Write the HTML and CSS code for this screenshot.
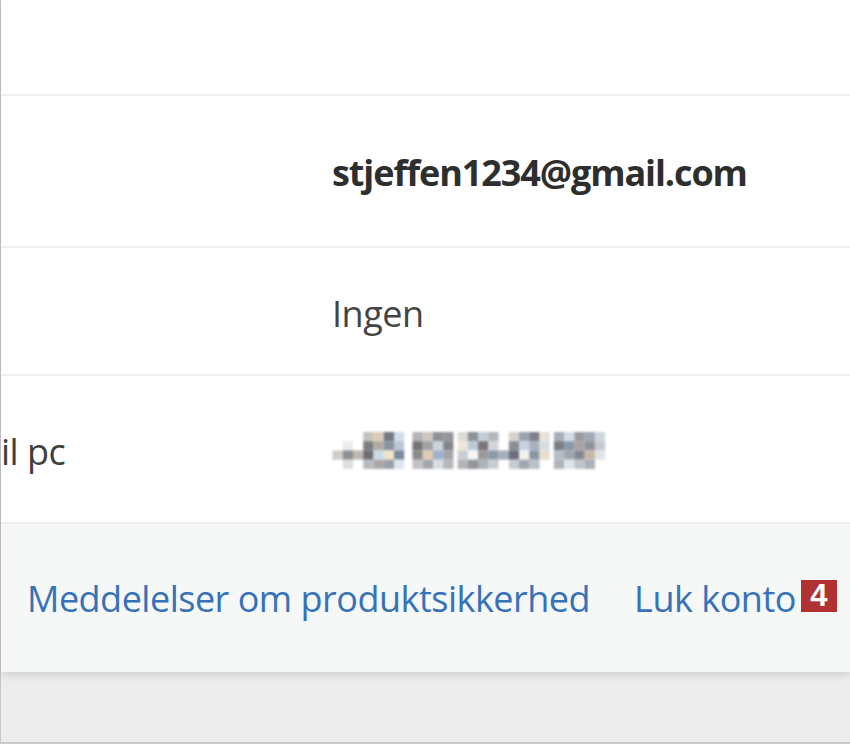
FILE: index.html
```html
<!DOCTYPE html>
<html>
<head>
	<meta charset="utf-8">
	<title>Konto</title>
	<link rel="stylesheet" href="styles.css">
</head>
<body>
	<div class="page">
		<div class="panel">
			<div class="row row-top"></div>
			<div class="row row-mail">
				<div class="label"></div>
				<div class="value strong">stjeffen1234@gmail.com</div>
			</div>
			<div class="row row-none">
				<div class="label"></div>
				<div class="value">Ingen</div>
			</div>
			<div class="row row-phone">
				<div class="label">il pc</div>
				<div class="value">
					<svg class="blur" width="288" height="41" viewBox="0 0 280 40">
						<!-- +45 -->
						<rect x="0" y="18" width="10" height="9" fill="#cfcac6"/>
						<rect x="10" y="9" width="10" height="9" fill="#ececec"/>
						<rect x="10" y="18" width="10" height="9" fill="#8d8e90"/>
						<rect x="10" y="27" width="10" height="9" fill="#dedede"/>
						<rect x="20" y="18" width="10" height="9" fill="#bdb6b0"/>
						<rect x="30" y="0" width="10" height="9" fill="#c6c2be"/>
						<rect x="30" y="9" width="10" height="9" fill="#7b7d80"/>
						<rect x="30" y="18" width="10" height="9" fill="#6b6d71"/>
						<rect x="30" y="27" width="10" height="9" fill="#b7babe"/>
						<rect x="40" y="0" width="10" height="9" fill="#dccab8"/>
						<rect x="40" y="9" width="10" height="9" fill="#b2aaa2"/>
						<rect x="40" y="18" width="10" height="9" fill="#c9d9e8"/>
						<rect x="40" y="27" width="10" height="9" fill="#aaa6a6"/>
						<rect x="50" y="0" width="10" height="9" fill="#727a84"/>
						<rect x="50" y="9" width="10" height="9" fill="#8a92a0"/>
						<rect x="50" y="18" width="10" height="9" fill="#f2e2c8"/>
						<rect x="50" y="27" width="10" height="9" fill="#9aa0a8"/>
						<rect x="60" y="0" width="10" height="9" fill="#d2dde8"/>
						<rect x="60" y="9" width="10" height="9" fill="#bcc7d2"/>
						<rect x="60" y="18" width="10" height="9" fill="#7a8aa0"/>
						<rect x="60" y="27" width="10" height="9" fill="#dde6ee"/>
						<!-- 61 -->
						<rect x="78" y="0" width="10" height="9" fill="#b4b4b4"/>
						<rect x="78" y="9" width="10" height="9" fill="#737476"/>
						<rect x="78" y="18" width="10" height="9" fill="#8a8a8a"/>
						<rect x="78" y="27" width="10" height="9" fill="#c2c2c2"/>
						<rect x="88" y="0" width="10" height="9" fill="#cbc6c2"/>
						<rect x="88" y="9" width="10" height="9" fill="#a2a2a6"/>
						<rect x="88" y="18" width="10" height="9" fill="#e0cab2"/>
						<rect x="88" y="27" width="10" height="9" fill="#a2a6aa"/>
						<rect x="98" y="0" width="10" height="9" fill="#8e9298"/>
						<rect x="98" y="9" width="10" height="9" fill="#cad2da"/>
						<rect x="98" y="18" width="10" height="9" fill="#9ab2ca"/>
						<rect x="98" y="27" width="10" height="9" fill="#dadde0"/>
						<rect x="108" y="0" width="10" height="9" fill="#92969a"/>
						<rect x="108" y="9" width="10" height="9" fill="#82868a"/>
						<rect x="108" y="18" width="10" height="9" fill="#a2a6aa"/>
						<rect x="108" y="27" width="10" height="9" fill="#b2b6ba"/>
						<!-- 28 -->
						<rect x="122" y="0" width="10" height="9" fill="#dadada"/>
						<rect x="122" y="9" width="10" height="9" fill="#efe5d8"/>
						<rect x="122" y="18" width="10" height="9" fill="#c9cdd1"/>
						<rect x="122" y="27" width="10" height="9" fill="#b6b2b2"/>
						<rect x="132" y="0" width="10" height="9" fill="#8e9298"/>
						<rect x="132" y="9" width="10" height="9" fill="#bacada"/>
						<rect x="132" y="18" width="10" height="9" fill="#f6f6f6"/>
						<rect x="132" y="27" width="10" height="9" fill="#92969a"/>
						<rect x="142" y="0" width="10" height="9" fill="#c2cdd8"/>
						<rect x="142" y="9" width="10" height="9" fill="#7e7478"/>
						<rect x="142" y="18" width="10" height="9" fill="#9c9a98"/>
						<rect x="142" y="27" width="10" height="9" fill="#aab2ba"/>
						<rect x="152" y="0" width="10" height="9" fill="#b2b6ba"/>
						<rect x="152" y="9" width="10" height="9" fill="#d2d6da"/>
						<rect x="152" y="18" width="10" height="9" fill="#8a98a8"/>
						<rect x="152" y="27" width="10" height="9" fill="#cacdd0"/>
						<!-- -47 -->
						<rect x="162" y="18" width="10" height="9" fill="#a6aeb8"/>
						<rect x="172" y="0" width="10" height="9" fill="#d8d2cc"/>
						<rect x="172" y="9" width="10" height="9" fill="#8a8e98"/>
						<rect x="172" y="18" width="10" height="9" fill="#6a6c7a"/>
						<rect x="172" y="27" width="10" height="9" fill="#c8ccd2"/>
						<rect x="182" y="0" width="10" height="9" fill="#9aa4b0"/>
						<rect x="182" y="9" width="10" height="9" fill="#c9d3de"/>
						<rect x="182" y="18" width="10" height="9" fill="#f4f2ee"/>
						<rect x="182" y="27" width="10" height="9" fill="#a0a6b0"/>
						<rect x="192" y="0" width="10" height="9" fill="#7e8088"/>
						<rect x="192" y="9" width="10" height="9" fill="#a8b2be"/>
						<rect x="192" y="18" width="10" height="9" fill="#8a96a4"/>
						<rect x="192" y="27" width="10" height="9" fill="#b8c0c8"/>
						<rect x="202" y="0" width="10" height="9" fill="#e8e2da"/>
						<rect x="202" y="9" width="10" height="9" fill="#d6dce2"/>
						<rect x="202" y="18" width="10" height="9" fill="#eadccc"/>
						<!-- 98 -->
						<rect x="216" y="0" width="10" height="9" fill="#a8aeb6"/>
						<rect x="216" y="9" width="10" height="9" fill="#7a7e86"/>
						<rect x="216" y="18" width="10" height="9" fill="#b4bcc4"/>
						<rect x="216" y="27" width="10" height="9" fill="#b0b4ba"/>
						<rect x="226" y="0" width="10" height="9" fill="#d2dce6"/>
						<rect x="226" y="9" width="10" height="9" fill="#8a98aa"/>
						<rect x="226" y="18" width="10" height="9" fill="#9ea6b0"/>
						<rect x="226" y="27" width="10" height="9" fill="#dce4ec"/>
						<rect x="236" y="0" width="10" height="9" fill="#9c9aa0"/>
						<rect x="236" y="9" width="10" height="9" fill="#a6a2a4"/>
						<rect x="236" y="18" width="10" height="9" fill="#838890"/>
						<rect x="236" y="27" width="10" height="9" fill="#c0c4c8"/>
						<rect x="246" y="0" width="10" height="9" fill="#a2aab4"/>
						<rect x="246" y="9" width="10" height="9" fill="#8e949c"/>
						<rect x="246" y="18" width="10" height="9" fill="#c8b8a8"/>
						<rect x="246" y="27" width="10" height="9" fill="#a8b0b8"/>
						<rect x="256" y="0" width="10" height="9" fill="#d0d6dc"/>
						<rect x="256" y="9" width="10" height="9" fill="#c4cad0"/>
						<rect x="256" y="18" width="10" height="9" fill="#dfe3e7"/>
					</svg>
				</div>
			</div>
			<div class="footer">
				<a href="#" class="link">Meddelelser om produktsikkerhed</a>
				<span class="close">
					<a href="#" class="link">Luk konto</a>
					<span class="badge">4</span>
				</span>
			</div>
		</div>
		<div class="bottom"></div>
	</div>
</body>
</html>
```

FILE: styles.css
```css
*{
	box-sizing: border-box;
}
html, body{
	margin: 0;
	height: 100%;
}
body{
	background: #ededed;
	font-family: "Open Sans", "Noto Sans", sans-serif;
	color: #3a3a3a;
	overflow: hidden;
}
.page{
	height: 744px;
	display: flex;
	flex-direction: column;
	border-left: 1px solid #c6c6c6;
}
.panel{
	background: #fff;
	position: relative;
	z-index: 1;
	box-shadow: 0 3px 8px rgba(0, 0, 0, 0.13);
}
.row{
	display: flex;
	align-items: center;
	border-bottom: 2px solid #efefef;
}
.row-top{
	height: 96px;
}
.row-mail{
	height: 152px;
	padding-top: 2px;
}
.row-none{
	height: 128px;
	padding-top: 4px;
}
.row-phone{
	height: 148px;
	padding-top: 4px;
}
.label{
	width: 331px;
	font-size: 36px;
	letter-spacing: -0.5px;
	color: #3f3f3f;
}
.value{
	font-size: 36px;
	letter-spacing: -0.5px;
	color: #444;
}
.strong{
	font-weight: 700;
	color: #2e2e2e;
	letter-spacing: -1.1px;
}
.blur{
	display: block;
	margin-top: 2px;
	filter: blur(0.9px);
}
.footer{
	background: #f6f7f7;
	height: 148px;
	display: flex;
	align-items: center;
	padding-left: 26px;
	gap: 44px;
}
.link{
	color: #3672b8;
	text-decoration: none;
	font-size: 36px;
	letter-spacing: -0.5px;
}
.close{
	display: flex;
	align-items: center;
	gap: 5px;
}
.badge{
	background: #b13232;
	color: #fff;
	font-family: "Liberation Sans", sans-serif;
	font-weight: 700;
	font-size: 31px;
	width: 36px;
	height: 32px;
	display: flex;
	align-items: center;
	justify-content: center;
	margin-top: -4px;
}
.bottom{
	flex: 1;
	background: #ededed;
	border-bottom: 2px solid #c9c9c9;
}
```
